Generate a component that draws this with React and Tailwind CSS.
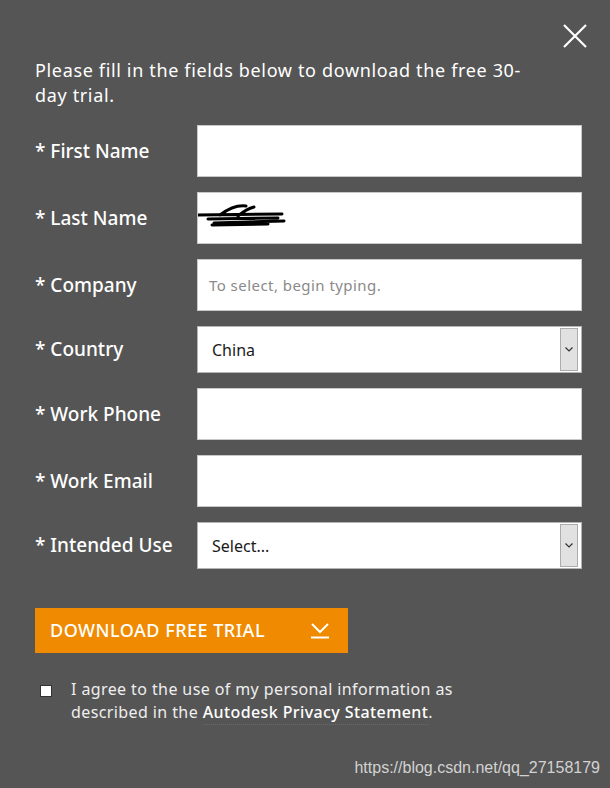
import React from 'react';

const FONT = { fontFamily: '"Noto Sans", "Open Sans", sans-serif' };

function TextRow({ label, children }) {
  return (
    <div className="flex items-center">
      <label className="w-[162px] text-[19px] font-medium text-white">* {label}</label>
      <div className="w-[385px] h-[52px] bg-white border border-[#c8c8c8] relative flex items-center">
        {children}
      </div>
    </div>
  );
}

function SelectRow({ label, value }) {
  return (
    <div className="flex items-center">
      <label className="w-[162px] text-[19px] font-medium text-white">* {label}</label>
      <div className="w-[385px] h-[47px] bg-white border border-[#b4b4b4] flex items-stretch">
        <span className="flex-1 flex items-center pl-[14px] text-[16px] text-[#1a1a1a]">{value}</span>
        <span className="w-[18px] my-[1px] mr-[3px] bg-[#e1e1e1] border border-[#adadad] flex items-center justify-center">
          <svg width="8" height="5" viewBox="0 0 8 5"><path d="M0.5 0.5 L4 4 L7.5 0.5" fill="none" stroke="#333" strokeWidth="1.2" /></svg>
        </span>
      </div>
    </div>
  );
}

export default function App() {
  return (
    <div className="min-h-[788px] w-[610px] bg-[#555555] pl-[35px] pt-[24px] flex flex-col" style={FONT}>
      <div className="flex justify-end pr-[23px]">
        <svg width="24" height="24" viewBox="0 0 24 24">
          <path d="M1 1 L23 23 M23 1 L1 23" stroke="#fff" strokeWidth="2.2" fill="none" />
        </svg>
      </div>

      <p className="mt-[10px] w-[510px] text-[18px] leading-[25px] tracking-[0.65px] text-white">
        Please fill in the fields below to download the free 30-day trial.
      </p>

      <div className="mt-[17px] flex flex-col gap-[15px]">
        <TextRow label="First Name" />
        <TextRow label="Last Name">
          <svg className="absolute left-0 top-[10px]" width="92" height="26" viewBox="0 0 92 26">
            <path d="M0 12 L84 11 M10 16 L80 15 M16 20 L86 18 M22 12 C30 6 40 2 48 3 M40 13 C46 8 52 5 56 4 M14 22 L70 21"
              stroke="#000" strokeWidth="3" fill="none" strokeLinecap="round" />
          </svg>
        </TextRow>
        <TextRow label="Company">
          <span className="pl-[11px] text-[15px] tracking-[0.45px] text-[#8a8a8a]">To select, begin typing.</span>
        </TextRow>
        <SelectRow label="Country" value="China" />
        <TextRow label="Work Phone" />
        <TextRow label="Work Email" />
        <SelectRow label="Intended Use" value="Select..." />
      </div>

      <button className="mt-[39px] w-[313px] h-[45px] bg-[#f08a00] flex items-center justify-between pl-[15px] pr-[19px] text-[18px] font-medium tracking-[0.5px] text-white">
        <span>DOWNLOAD FREE TRIAL</span>
        <svg width="18" height="16" viewBox="0 0 18 16">
          <path d="M1 1 L9 9 L17 1" stroke="#fff" strokeWidth="2" fill="none" />
          <path d="M0 14.5 L18 14.5" stroke="#fff" strokeWidth="2" />
        </svg>
      </button>

      <div className="mt-[25px] flex items-start">
        <span className="mt-[7px] ml-[5px] w-[12px] h-[12px] bg-white border border-[#333]" />
        <p className="ml-[19px] text-[16px] leading-[23px] tracking-[0.4px] text-[#eeeeee]">
          I agree to the use of my personal information as<br />
          described in the <span className="font-medium text-white border-b border-dotted border-[#6a6a6a] pb-[1px]">Autodesk Privacy Statement</span>.
        </p>
      </div>

      <div className="mt-auto pb-[8px] pr-[10px] flex justify-end">
        <span className="text-[16px] text-[#d2d2d2]" style={{ fontFamily: '"Liberation Sans", Arial, sans-serif' }}>
          https://blog.csdn.net/qq_27158179
        </span>
      </div>
    </div>
  );
}
